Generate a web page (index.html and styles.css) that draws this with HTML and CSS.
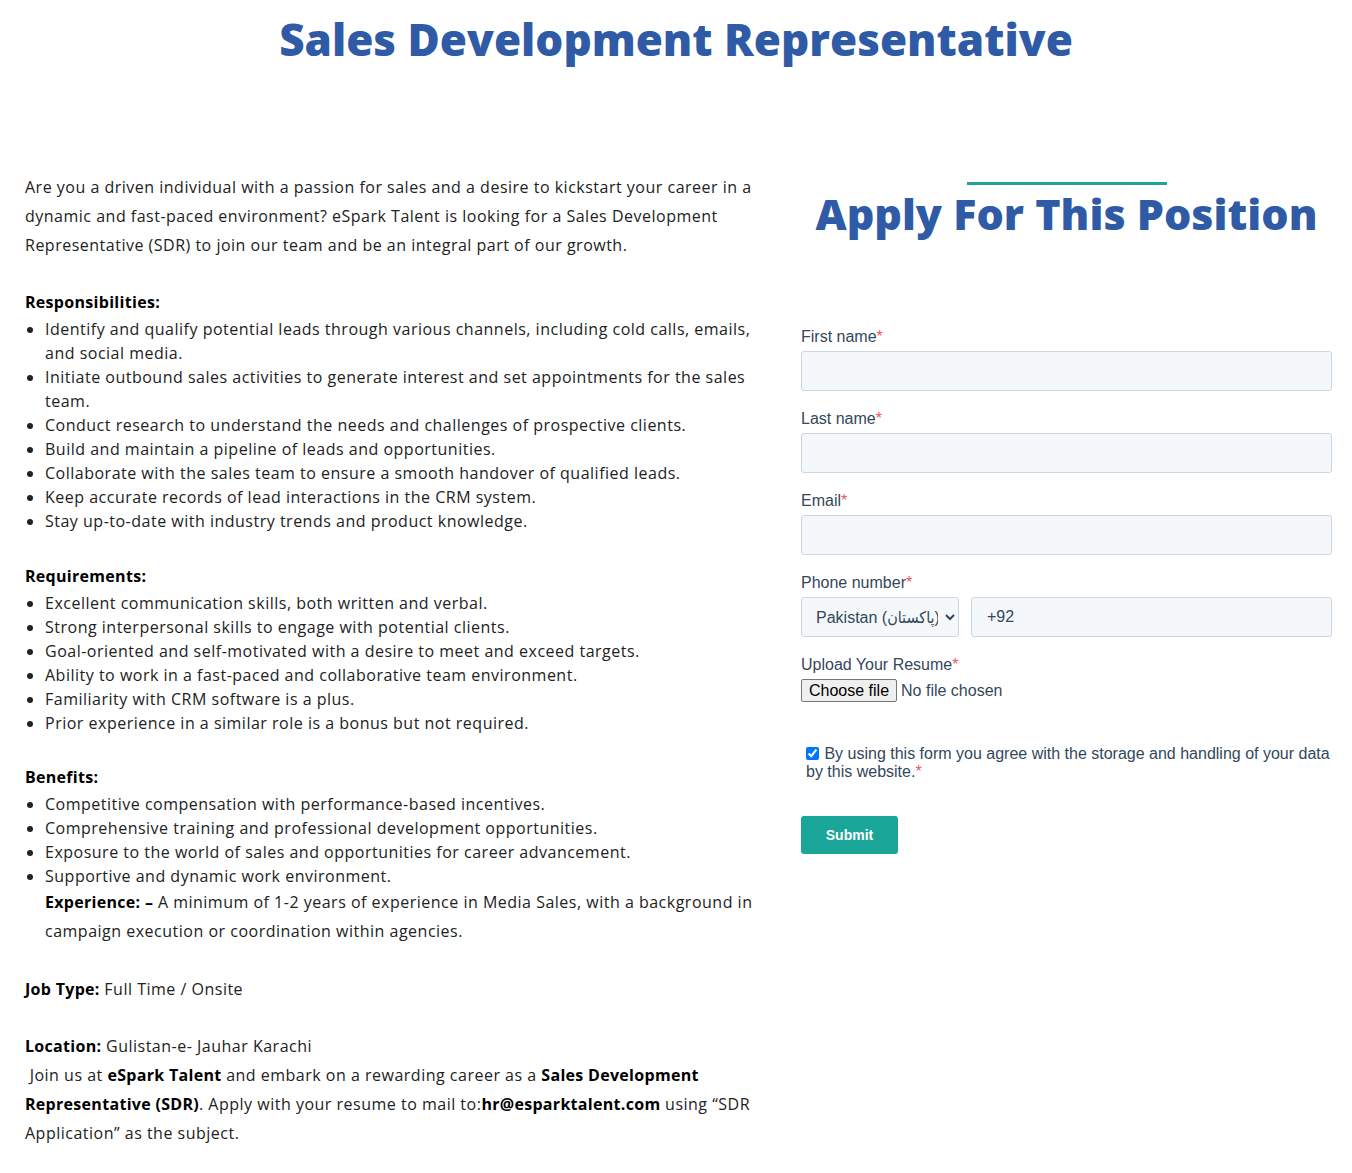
FILE: index.html
```html
<!DOCTYPE html>
<html lang="en">
<head>
<meta charset="utf-8">
<title>Sales Development Representative</title>
<link rel="stylesheet" href="styles.css">
</head>
<body>
<h1 class="page-title">Sales Development Representative</h1>
<div class="cols">
  <div class="job">
    <p class="intro">Are you a driven individual with a passion for sales and a desire to kickstart your career in a dynamic and fast-paced environment? eSpark Talent is looking for a Sales Development Representative (SDR) to join our team and be an integral part of our growth.</p>

    <p class="sec-head"><b>Responsibilities:</b></p>
    <ul class="list wide-gap">
      <li>Identify and qualify potential leads through various channels, including cold calls, emails, and social media.</li>
      <li>Initiate outbound sales activities to generate interest and set appointments for the sales team.</li>
      <li>Conduct research to understand the needs and challenges of prospective clients.</li>
      <li>Build and maintain a pipeline of leads and opportunities.</li>
      <li>Collaborate with the sales team to ensure a smooth handover of qualified leads.</li>
      <li>Keep accurate records of lead interactions in the CRM system.</li>
      <li>Stay up-to-date with industry trends and product knowledge.</li>
    </ul>

    <p class="sec-head"><b>Requirements:</b></p>
    <ul class="list">
      <li>Excellent communication skills, both written and verbal.</li>
      <li>Strong interpersonal skills to engage with potential clients.</li>
      <li>Goal-oriented and self-motivated with a desire to meet and exceed targets.</li>
      <li>Ability to work in a fast-paced and collaborative team environment.</li>
      <li>Familiarity with CRM software is a plus.</li>
      <li>Prior experience in a similar role is a bonus but not required.</li>
    </ul>

    <p class="sec-head"><b>Benefits:</b></p>
    <ul class="list tight">
      <li>Competitive compensation with performance-based incentives.</li>
      <li>Comprehensive training and professional development opportunities.</li>
      <li>Exposure to the world of sales and opportunities for career advancement.</li>
      <li>Supportive and dynamic work environment.</li>
    </ul>
    <p class="experience"><b>Experience: &ndash;</b> A minimum of 1-2 years of experience in Media Sales, with a background in campaign execution or coordination within agencies.</p>

    <p class="para"><b>Job Type:</b> Full Time / Onsite</p>

    <p class="para tight"><b>Location:</b> Gulistan-e- Jauhar Karachi</p>
    <p class="para closing">&nbsp;Join us at <b>eSpark Talent</b> and embark on a rewarding career as a <b>Sales Development Representative (SDR)</b>. Apply with your resume to mail to:<b>hr@esparktalent.com</b> using &ldquo;SDR Application&rdquo; as the subject.</p>
  </div>

  <div class="apply">
    <div class="apply-head">
      <span class="accent-line"></span>
      <h2 class="apply-title">Apply For This Position</h2>
    </div>
    <form class="hs-form">
      <div class="field">
        <label class="hs-label">First name<span class="req">*</span></label>
        <input class="hs-input" type="text">
      </div>
      <div class="field">
        <label class="hs-label">Last name<span class="req">*</span></label>
        <input class="hs-input" type="text">
      </div>
      <div class="field">
        <label class="hs-label">Email<span class="req">*</span></label>
        <input class="hs-input" type="email">
      </div>
      <div class="field">
        <label class="hs-label">Phone number<span class="req">*</span></label>
        <div class="phone-row">
          <select class="hs-input country">
            <option>Pakistan (پاکستان)</option>
          </select>
          <input class="hs-input phone" type="tel" value="+92">
        </div>
      </div>
      <div class="field">
        <span class="hs-label">Upload Your Resume<span class="req">*</span></span>
        <div class="file-row">
          <label class="file-btn">Choose file<input class="file-hidden" type="file"></label>
          <span class="file-none">No file chosen</span>
        </div>
      </div>
      <div class="consent">
        <label class="consent-label"><input type="checkbox" checked> By using this form you agree with the storage and handling of your data by this website.<span class="req">*</span></label>
      </div>
      <button type="button" class="submit">Submit</button>
    </form>
  </div>
</div>
</body>
</html>
```

FILE: styles.css
```css
* { box-sizing: border-box; }

body {
  margin: 0;
  background: #ffffff;
  font-family: "Open Sans", "Noto Sans", sans-serif;
  color: #222222;
}

.page-title {
  margin: 12px 0 0;
  text-align: center;
  font-family: "Open Sans", sans-serif;
  font-weight: 800;
  font-size: 44px;
  line-height: 55px;
  color: #2f5aa6;
}

.cols {
  display: flex;
  margin-top: 106px;
  padding: 0 20px 0 25px;
  gap: 41px;
}

.job {
  width: 735px;
  flex: none;
  font-size: 16px;
  letter-spacing: 0.5px;
}

.job b { color: #000; font-weight: 700; letter-spacing: 0.3px; }

.job p { margin: 0; }

.intro {
  line-height: 29px;
  margin-bottom: 28px !important;
}

.sec-head { line-height: 29px; }

.list {
  margin: 0 0 28px;
  padding-left: 20px;
  line-height: 24px;
}

.list.wide-gap { margin-bottom: 29px; }

.list.tight { margin-bottom: 0; }

.experience {
  padding-left: 20px;
  line-height: 29px;
  margin-bottom: 29px !important;
}

.para {
  line-height: 29px;
  margin-bottom: 28px !important;
}

.para.tight { margin-bottom: 0 !important; }

.apply {
  flex: 1;
  min-width: 0;
}

.apply-head {
  display: flex;
  flex-direction: column;
  align-items: center;
  padding-top: 9px;
}

.accent-line {
  display: block;
  width: 200px;
  height: 3px;
  background: #1fa39a;
}

.apply-title {
  margin: 0;
  font-family: "Open Sans", sans-serif;
  font-weight: 800;
  font-size: 43px;
  line-height: 58px;
  white-space: nowrap;
  color: #2f5aa6;
}

.hs-form {
  margin-top: 84px;
  font-family: "Liberation Sans", Arial, sans-serif;
}

.field { margin-bottom: 18px; }

.hs-label {
  display: block;
  font-size: 16px;
  line-height: 20px;
  color: #33475b;
  margin-bottom: 4px;
}

.req { color: #f2545b; }

.hs-input {
  display: block;
  width: 100%;
  height: 40px;
  padding: 0 15px;
  background: #f5f8fa;
  border: 1px solid #cbd6e2;
  border-radius: 3px;
  font-family: "Liberation Sans", Arial, sans-serif;
  font-size: 16px;
  color: #33475b;
}

.phone-row {
  display: flex;
  gap: 12px;
}

.country {
  width: 158px;
  flex: none;
  padding: 0 4px 0 10px;
  font-family: "Liberation Sans", "DejaVu Sans Condensed", "DejaVu Sans", sans-serif;
}

.phone { flex: 1; }

.file-row {
  display: flex;
  align-items: center;
  gap: 4px;
  font-size: 16px;
}

.file-btn {
  display: inline-block;
  height: 23px;
  line-height: 21px;
  padding: 0 7px;
  background: #efefef;
  border: 1px solid #767676;
  border-radius: 2px;
  color: #000;
  font-size: 16px;
  cursor: pointer;
}

.file-hidden { display: none; }

.file-none { color: #33475b; }

.consent {
  margin-top: 43px;
  padding-left: 5px;
}

.consent-label {
  display: block;
  font-size: 16px;
  line-height: 18px;
  color: #33475b;
}

.consent-label input {
  margin: 0 1px 0 0;
  width: 13px;
  height: 13px;
  vertical-align: -1px;
}

.submit {
  margin-top: 35px;
  width: 97px;
  height: 38px;
  border: none;
  border-radius: 3px;
  background: #19a598;
  color: #ffffff;
  font-family: "Liberation Sans", Arial, sans-serif;
  font-weight: 700;
  font-size: 14px;
  cursor: pointer;
}
```
